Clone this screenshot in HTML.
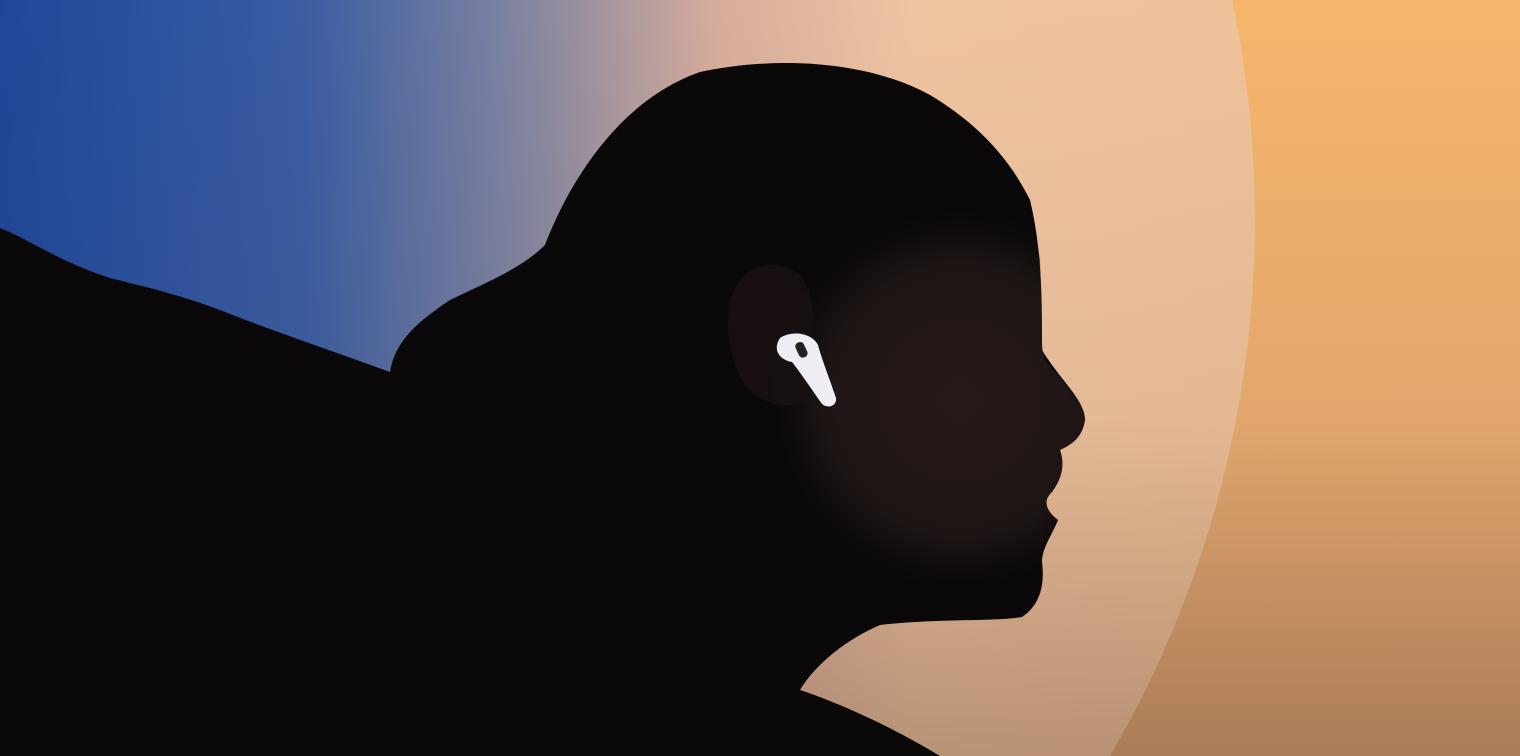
<!DOCTYPE html>
<html><head><meta charset="utf-8"><style>
html,body{margin:0;padding:0;width:1520px;height:756px;overflow:hidden;background:#000}
svg{display:block}
</style></head><body>
<svg width="1520" height="756" viewBox="0 0 1520 756" xmlns="http://www.w3.org/2000/svg">
<defs>
<linearGradient id="bg" x1="0" y1="0" x2="1520" y2="0" gradientUnits="userSpaceOnUse">
<stop offset="0" stop-color="#1f4799"/>
<stop offset="0.2" stop-color="#3a5da3"/>
<stop offset="0.36" stop-color="#8b8aa0"/>
<stop offset="0.47" stop-color="#d6ac9c"/>
<stop offset="0.6" stop-color="#efc4a2"/>
<stop offset="0.82" stop-color="#efc29a"/>
<stop offset="1" stop-color="#f2b978"/>
</linearGradient>
<linearGradient id="vd" x1="0" y1="0" x2="0" y2="1">
<stop offset="0" stop-color="#3a2010" stop-opacity="0"/>
<stop offset="0.55" stop-color="#3a2010" stop-opacity="0.06"/>
<stop offset="1" stop-color="#3a2010" stop-opacity="0.3"/>
</linearGradient>
<linearGradient id="out" x1="0" y1="0" x2="0" y2="1">
<stop offset="0" stop-color="#f5b66c"/>
<stop offset="0.5" stop-color="#efb072"/>
<stop offset="1" stop-color="#dca477"/>
</linearGradient>
<radialGradient id="face" cx="960" cy="400" r="200" gradientUnits="userSpaceOnUse">
<stop offset="0" stop-color="#2e1f1d"/>
<stop offset="0.7" stop-color="#211716"/>
<stop offset="1" stop-color="#0b0809" stop-opacity="0"/>
</radialGradient>
<clipPath id="outside"><path d="M0,0 H1520 V756 H0 Z M192,220 m-1063,0 a1063,1063 0 1,0 2126,0 a1063,1063 0 1,0 -2126,0 Z" clip-rule="evenodd"/></clipPath>
</defs>
<rect width="1520" height="756" fill="url(#bg)"/>
<rect width="1520" height="756" fill="url(#out)" clip-path="url(#outside)"/>
<rect width="1520" height="756" fill="url(#vd)"/>
<path d="M0,228 C30,240 60,262 110,278 C150,288 180,295 220,310 C270,330 330,350 390,372 C395,340 420,320 450,300 C480,285 520,270 545,245 C570,180 620,100 700,72 C780,55 870,62 930,95 C980,125 1010,160 1030,200 C1042,250 1042,300 1042,350 C1060,380 1085,400 1085,420 C1082,440 1068,446 1060,450 C1065,465 1062,478 1052,492 C1043,500 1045,510 1058,520 C1052,535 1042,548 1042,562 C1045,585 1040,605 1022,617 C990,622 940,618 880,625 C845,640 815,665 800,690 C830,700 880,720 940,756 L0,756 Z" fill="#0a0809"/>
<path d="M760,200 C840,160 920,160 980,175 C1020,195 1035,220 1040,260 C1042,310 1040,350 1045,360 C1070,390 1085,405 1085,420 C1082,440 1068,446 1060,450 C1065,465 1062,478 1052,492 C1043,500 1045,510 1058,520 C1052,535 1042,548 1042,562 C1045,585 1040,605 1022,617 C990,622 940,618 880,625 C830,560 790,480 770,400 Z" fill="url(#face)" opacity="0.8"/>
<path d="M730,300 C740,265 775,255 800,275 C820,300 815,360 805,400 C790,410 760,405 745,385 C730,360 725,330 730,300 Z" fill="#1a1211" opacity="0.8"/>
<path d="M780,338 C792,330 812,333 818,345 C822,360 830,380 836,398 C837,406 828,409 822,404 C812,390 800,372 792,362 C780,360 772,350 780,338 Z" fill="#eeeef4"/>
<rect x="797" y="342" width="9" height="16" rx="4" transform="rotate(-25 801 350)" fill="#222"/>
</svg>
</body></html>
